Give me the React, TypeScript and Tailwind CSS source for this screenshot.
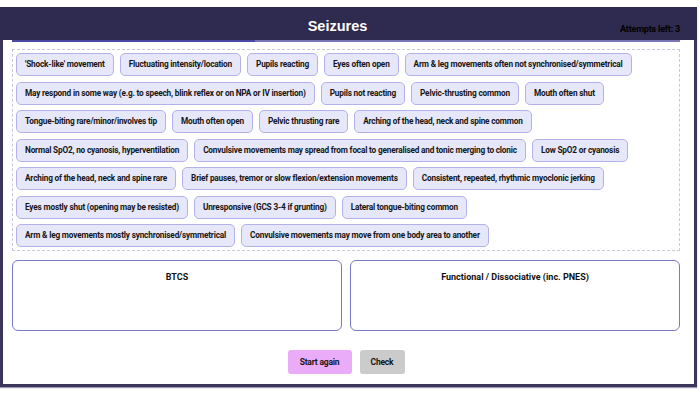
import React from "react";

const rows = [
  [
    "'Shock-like' movement",
    "Fluctuating intensity/location",
    "Pupils reacting",
    "Eyes often open",
    "Arm & leg movements often not synchronised/symmetrical",
  ],
  [
    "May respond in some way (e.g. to speech, blink reflex or on NPA or IV insertion)",
    "Pupils not reacting",
    "Pelvic-thrusting common",
    "Mouth often shut",
  ],
  [
    "Tongue-biting rare/minor/involves tip",
    "Mouth often open",
    "Pelvic thrusting rare",
    "Arching of the head, neck and spine common",
  ],
  [
    "Normal SpO2, no cyanosis, hyperventilation",
    "Convulsive movements may spread from focal to generalised and tonic merging to clonic",
    "Low SpO2 or cyanosis",
  ],
  [
    "Arching of the head, neck and spine rare",
    "Brief pauses, tremor or slow flexion/extension movements",
    "Consistent, repeated, rhythmic myoclonic jerking",
  ],
  [
    "Eyes mostly shut (opening may be resisted)",
    "Unresponsive (GCS 3-4 if grunting)",
    "Lateral tongue-biting common",
  ],
  [
    "Arm & leg movements mostly synchronised/symmetrical",
    "Convulsive movements may move from one body area to another",
  ],
];

export default function App() {
  return (
    <div className="w-[700px] h-[394px] bg-white pt-[7px]" style={{ fontFamily: "Roboto, 'Liberation Sans', sans-serif" }}>
      <div className="w-[697px] border-x-[3px] border-b-[3px] border-[#3b3659] shadow-[0_1px_1px_#9c99b4]">
        <div className="relative h-[33px] bg-[#2f2a4f] -mx-[3px] flex items-center justify-center pr-[22px]">
          <span className="text-white font-bold text-[14.5px] mt-[6px]" style={{ fontFamily: "'Liberation Sans', Arial, sans-serif" }}>
            Seizures
          </span>
          <span className="absolute right-[17px] bottom-[4px] text-[9px] font-bold text-black tracking-[-0.2px]">
            Attempts left: 3
          </span>
        </div>
        <div className="px-[9px]">
          <div className="flex h-[2px] w-[668px]">
            <div className="w-[243px] bg-[#4c4aa0]" />
            <div className="flex-1 bg-[#7a76b4]" />
          </div>
          <div className="mt-[7px] w-[668px] border border-dashed border-[#c9c7dc] p-[3px] flex flex-col gap-[5.5px]">
            {rows.map((row, i) => (
              <div key={i} className="flex gap-[6px]">
                {row.map((c) => (
                  <div
                    key={c}
                    className="h-[23px] px-[8px] flex items-center rounded-[5px] border border-[#b4b1ea] bg-[#e7e7fa] text-[8.25px] font-bold tracking-[-0.18px] text-[#151515] whitespace-nowrap"
                  >
                    {c}
                  </div>
                ))}
              </div>
            ))}
          </div>
          <div className="mt-[9px] flex gap-[8px] w-[668px]">
            <div className="w-[330px] h-[71px] rounded-[6px] border border-[#7c79c8] flex justify-center pt-[10px]">
              <span className="text-[9px] font-bold text-[#111]">BTCS</span>
            </div>
            <div className="w-[330px] h-[71px] rounded-[6px] border border-[#7c79c8] flex justify-center pt-[10px]">
              <span className="text-[9px] font-bold text-[#111]">Functional / Dissociative (inc. PNES)</span>
            </div>
          </div>
          <div className="mt-[19px] pb-[10px] flex justify-center gap-[8px] w-[668px]">
            <div className="w-[64px] h-[24px] rounded-[3px] bg-[#eaabf8] flex items-center justify-center text-[8.5px] font-bold tracking-[-0.2px] text-[#151515]">
              Start again
            </div>
            <div className="w-[45px] h-[24px] rounded-[3px] bg-[#cbcbcb] flex items-center justify-center text-[8.5px] font-bold tracking-[-0.2px] text-[#151515]">
              Check
            </div>
          </div>
        </div>
      </div>
    </div>
  );
}
